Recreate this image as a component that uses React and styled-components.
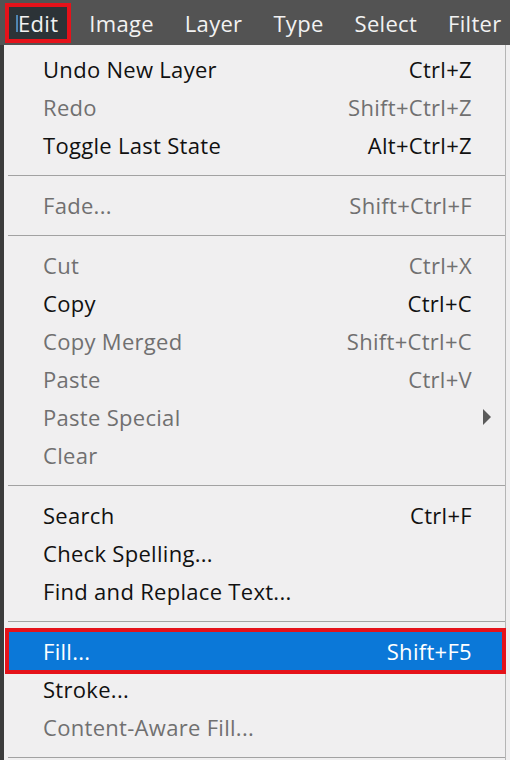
import React from "react";
import styled, { createGlobalStyle } from "styled-components";

const GlobalStyle = createGlobalStyle`
  html, body {
    margin: 0;
    padding: 0;
    background: #f0eff0;
  }
  body {
    font-family: "Open Sans", "Noto Sans", sans-serif;
  }
`;

const Page = styled.div`
  width: 510px;
  height: 760px;
  overflow: hidden;
  display: flex;
  flex-direction: column;
`;

const MenuBar = styled.div`
  height: 45px;
  flex-shrink: 0;
  background: #535353;
  display: flex;
  align-items: center;
  gap: 5px;
  padding-left: 5px;
`;

const MenuTitle = styled.div`
  position: relative;
  height: 32px;
  display: flex;
  align-items: center;
  padding: 0 9px;
  border: 4px solid ${(p) => (p.$active ? "#e5121a" : "transparent")};
  background: ${(p) => (p.$active ? "#2c3337" : "transparent")};
  color: #f2f2f2;
  font-size: 22px;
  letter-spacing: 0.3px;
`;

const Caret = styled.span`
  position: absolute;
  left: 7px;
  top: 8px;
  width: 2px;
  height: 17px;
  background: #4f86b3;
`;

const Body = styled.div`
  flex: 1;
  display: flex;
  min-height: 0;
`;

const Edge = styled.div`
  width: 4px;
  background: #3b3b3b;
`;

const Panel = styled.div`
  width: 501px;
  border-right: 1px solid #b5b5b5;
  display: flex;
  flex-direction: column;
`;

const Row = styled.div`
  position: relative;
  height: 38px;
  flex-shrink: 0;
  display: flex;
  align-items: center;
  justify-content: space-between;
  padding: 0 33px 0 39px;
  font-size: 22px;
  letter-spacing: 0.3px;
  color: ${(p) => (p.$disabled ? "#707070" : "#111111")};
`;

const HighlightRow = styled(Row)`
  margin: 0 3px 0 5px;
  padding: 0 30px 0 34px;
  background: #0b78d8;
  color: #ffffff;
  outline: 4px solid #e5121a;
`;

const Separator = styled.div`
  height: 22px;
  flex-shrink: 0;
  display: flex;
  align-items: center;
  padding: 0 0 0 4px;
  &::after {
    content: "";
    flex: 1;
    height: 1px;
    background: #a2a2a2;
  }
`;

const Arrow = styled.span`
  width: 0;
  height: 0;
  margin-right: -19px;
  border-top: 8px solid transparent;
  border-bottom: 8px solid transparent;
  border-left: 8px solid #5a5a5a;
`;

const Spacer = styled.div`
  height: 5px;
  flex-shrink: 0;
`;

const titles = ["Edit", "Image", "Layer", "Type", "Select", "Filter"];

const groups = [
  [
    { label: "Undo New Layer", key: "Ctrl+Z" },
    { label: "Redo", key: "Shift+Ctrl+Z", disabled: true },
    { label: "Toggle Last State", key: "Alt+Ctrl+Z" },
  ],
  [{ label: "Fade...", key: "Shift+Ctrl+F", disabled: true }],
  [
    { label: "Cut", key: "Ctrl+X", disabled: true },
    { label: "Copy", key: "Ctrl+C" },
    { label: "Copy Merged", key: "Shift+Ctrl+C", disabled: true },
    { label: "Paste", key: "Ctrl+V", disabled: true },
    { label: "Paste Special", submenu: true, disabled: true },
    { label: "Clear", disabled: true },
  ],
  [
    { label: "Search", key: "Ctrl+F" },
    { label: "Check Spelling..." },
    { label: "Find and Replace Text..." },
  ],
  [
    { label: "Fill...", key: "Shift+F5", highlight: true },
    { label: "Stroke..." },
    { label: "Content-Aware Fill...", disabled: true },
  ],
];

function MenuItem({ item }) {
  const Comp = item.highlight ? HighlightRow : Row;
  return (
    <Comp $disabled={item.disabled}>
      <span>{item.label}</span>
      {item.submenu ? <Arrow /> : <span>{item.key}</span>}
    </Comp>
  );
}

export default function App() {
  return (
    <Page>
      <GlobalStyle />
      <MenuBar>
        {titles.map((t, i) => (
          <MenuTitle key={t} $active={i === 0}>
            {i === 0 && <Caret />}
            {t}
          </MenuTitle>
        ))}
      </MenuBar>
      <Body>
        <Edge />
        <Panel>
          <Spacer />
          {groups.map((g, gi) => (
            <React.Fragment key={gi}>
              {g.map((item) => (
                <MenuItem key={item.label} item={item} />
              ))}
              <Separator />
            </React.Fragment>
          ))}
        </Panel>
      </Body>
    </Page>
  );
}
